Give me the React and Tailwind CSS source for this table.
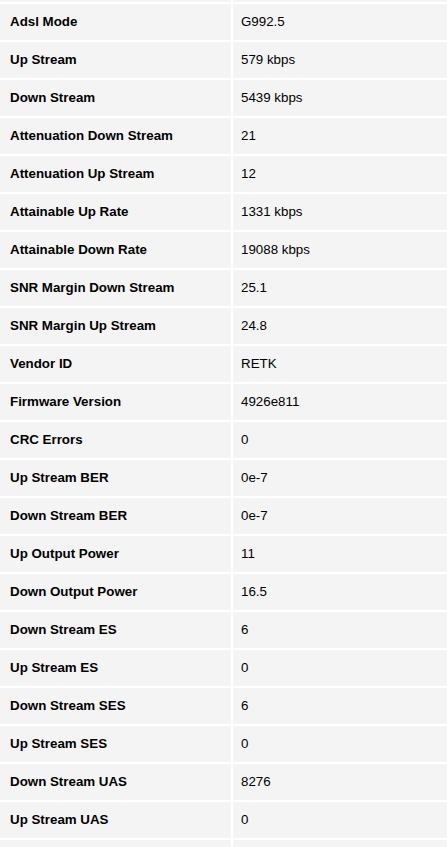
const rows = [
  ["Adsl Mode", "G992.5"],
  ["Up Stream", "579 kbps"],
  ["Down Stream", "5439 kbps"],
  ["Attenuation Down Stream", "21"],
  ["Attenuation Up Stream", "12"],
  ["Attainable Up Rate", "1331 kbps"],
  ["Attainable Down Rate", "19088 kbps"],
  ["SNR Margin Down Stream", "25.1"],
  ["SNR Margin Up Stream", "24.8"],
  ["Vendor ID", "RETK"],
  ["Firmware Version", "4926e811"],
  ["CRC Errors", "0"],
  ["Up Stream BER", "0e-7"],
  ["Down Stream BER", "0e-7"],
  ["Up Output Power", "11"],
  ["Down Output Power", "16.5"],
  ["Down Stream ES", "6"],
  ["Up Stream ES", "0"],
  ["Down Stream SES", "6"],
  ["Up Stream SES", "0"],
  ["Down Stream UAS", "8276"],
  ["Up Stream UAS", "0"],
];

const App = () => {
  return (
    <div
      className="h-[847px] w-[447px] overflow-hidden bg-white text-[13.33px] text-black"
      style={{ fontFamily: '"Liberation Sans", Arial, sans-serif' }}
    >
      <div className="-mt-[34px] grid grid-cols-[231px_1fr] gap-[2px]">
        <div className="h-[36px] bg-[#f4f4f4]" />
        <div className="h-[36px] bg-[#f4f4f4]" />
        {rows.map(([label, value]) => (
          <div key={label} className="contents">
            <div className="flex h-[36px] items-center bg-[#f4f4f4] pl-[10px] font-bold">
              {label}
            </div>
            <div className="flex h-[36px] items-center bg-[#f4f4f4] pl-[8px]">
              {value}
            </div>
          </div>
        ))}
        <div className="h-[36px] bg-[#f4f4f4]" />
        <div className="h-[36px] bg-[#f4f4f4]" />
      </div>
    </div>
  );
};

export default App;
